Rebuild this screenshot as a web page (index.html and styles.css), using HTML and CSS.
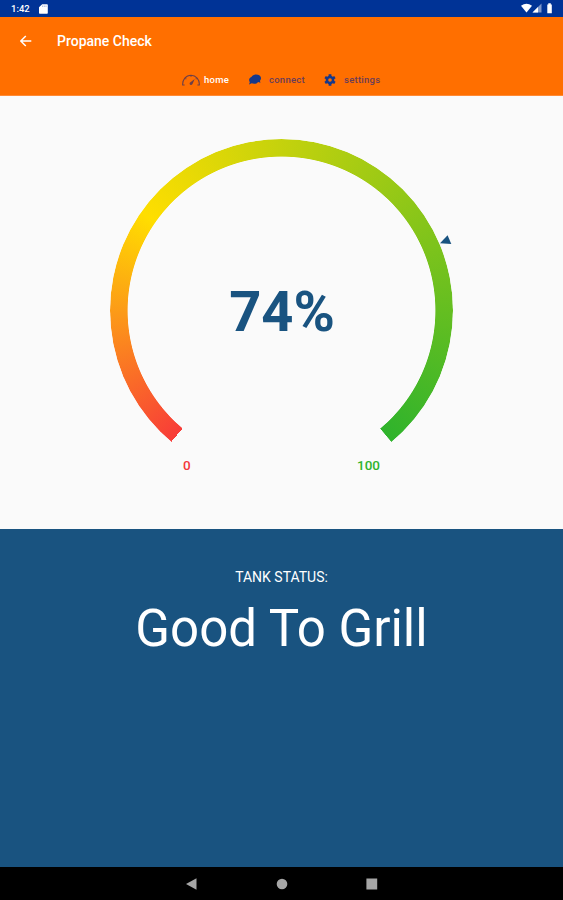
FILE: index.html
```html
<!DOCTYPE html>
<html lang="en">
<head>
    <meta charset="UTF-8">
    <title>Propane Check</title>
    <link rel="stylesheet" href="styles.css">
</head>
<body>

<div class="status-bar">
    <span class="clock">1:42</span>
    <svg class="sd-card" width="9" height="10" viewBox="0 0 9 10"><path fill="#fff" d="M3.200 .3h4.800q.8 0 .8.8v7.800q0 .8-.8.8H.8Q0 9.700 0 8.900V3.300z"/><path stroke="#8ba0d0" stroke-width=".7" d="M3.600 1.500v1.500M5.300 1.500v1.500M7 1.500v1.500"/></svg>
    <svg class="signals" width="34" height="12" viewBox="0 0 34 12">
        <path fill="#fff" d="M0 3.800Q5.500-.2 11 3.800L5.500 10.500z"/>
        <path fill="#7f98cb" d="M20.500 1.500v9h-9z"/>
        <path fill="#fff" d="M17 5v5.500h-5.500z"/>
        <path fill="#fff" d="M26.300 2.500h1V1.300h2.500v1.200h1v8.700h-4.500z"/>
    </svg>
</div>

<div class="header">
    <div class="title-row">
        <svg class="back" width="12" height="12" viewBox="0 0 12 12"><path fill="none" stroke="#fff" stroke-width="1.500" d="M11.300 6H.9M5.800 1L.8 6l5 5"/></svg>
        <span class="title">Propane Check</span>
    </div>
    <div class="tabs">
        <a class="tab home active">
            <svg width="18" height="12" viewBox="0 0 18 12">
                <path fill="none" stroke="#6d3f48" stroke-width="1.100" d="M2.600 11H.7C.3 5.500 4 1.200 9 1.200s8.700 4.300 8.300 9.800h-1.900M3.200 4.200l1.100 1M9 1.500v1.300M14.800 4.200l-1.100 1"/>
                <path fill="#6d3f48" d="M12.700 5l-2.200 5q-.8 1.300-2 .9-1.500-.8-.7-2.100z"/>
            </svg>
            <span>home</span>
        </a>
        <a class="tab connect">
            <svg width="12" height="11" viewBox="0 0 12 11"><path fill="#15388b" d="M7 .4c3 0 5 1.500 5 3.700 0 1.200-.4 2-1.100 2.700l.6 1.900-2.400-.8c-.8 1.200-2.300 1.900-4 1.900-.9 0-1.700-.2-2.400-.5L0 10.400l.8-2.200C-.6 6.100.2 3.600 2.400 2.900 3.200 1.300 4.900.4 7 .4z"/></svg>
            <span>connect</span>
        </a>
        <a class="tab settings">
            <svg width="12" height="12" viewBox="0 0 12 12">
                <g stroke="#15388b" stroke-width="2.800"><path d="M6 .3v11.400M1.100 3.150l9.800 5.700M1.100 8.850l9.800-5.700"/></g>
                <circle cx="6" cy="6" r="4.300" fill="#15388b"/>
                <circle cx="6" cy="6" r="1.800" fill="#ff6f00"/>
            </svg>
            <span>settings</span>
        </a>
    </div>
</div>

<div class="main">
    <div class="gauge">
        <div class="ring"></div>
        <div class="value">74%</div>
        <svg class="pointer" width="12" height="10" viewBox="0 0 12 10"><path fill="#195380" d="M0 8.200L7.600.3l3.700 8.700z"/></svg>
    </div>
    <div class="limits">
        <span class="min">0</span>
        <span class="max">100</span>
    </div>
</div>

<div class="tank">
    <div class="tank-label">TANK STATUS:</div>
    <div class="tank-status">Good To Grill</div>
</div>

<div class="nav-bar">
    <svg width="12" height="12" viewBox="0 0 12 12"><path fill="#a6a6a6" d="M10.500 .3v11.400L0 6z"/></svg>
    <svg width="12" height="12" viewBox="0 0 12 12"><circle cx="6" cy="6" r="5.300" fill="#a6a6a6"/></svg>
    <svg width="12" height="12" viewBox="0 0 12 12"><path fill="#a6a6a6" d="M.4.500h10.800v11H.4z"/></svg>
</div>

</body>
</html>
```
FILE: styles.css
```css
* {
    box-sizing: border-box;
}

body {
    display: flex;
    flex-direction: column;
    height: 900px;
    margin: 0;
    overflow: hidden;
    font-family: Roboto, sans-serif;
    background: #fafafa;
}

svg {
    display: block;
    flex: none;
}

.status-bar {
    display: flex;
    height: 17px;
    padding: 2px 8px 0 11px;
    background: #003396;
    color: #fff;
}

.clock {
    width: 28px;
    font-size: 9.5px;
    font-weight: 500;
    line-height: 14px;
}

.sd-card {
    margin-top: 2px;
}

.signals {
    margin-left: auto;
}

.header {
    height: 79px;
    background: #ff6f00;
    border-bottom: 1px solid #ff8a35;
}

.title-row {
    display: flex;
    align-items: center;
    height: 47px;
    padding-left: 20px;
    color: #fff;
}

.title {
    margin-left: 25px;
    font-size: 14px;
    font-weight: 500;
}

.tabs {
    display: flex;
    height: 31px;
    padding-left: 182px;
}

.tab {
    display: flex;
    align-items: center;
    color: #6a3d58;
    font-size: 9.5px;
    font-weight: 500;
    letter-spacing: .25px;
}

.tab.active {
    color: #fff;
}

.home {
    width: 67px;
    gap: 4px;
}

.connect {
    width: 75px;
    gap: 8px;
}

.settings {
    gap: 8px;
}

.main {
    height: 433px;
    padding-top: 43px;
}

.gauge {
    position: relative;
    display: grid;
    width: 343px;
    height: 343px;
    margin: 0 auto;
}

.ring,
.value {
    grid-area: 1 / 1;
}

.ring {
    border-radius: 50%;
    background: conic-gradient(from 220deg, #f83c38, #ffde00 85deg, #2fb32c 280deg, transparent 280.2deg);
    -webkit-mask: radial-gradient(circle, transparent 153.5px, #000 154.3px);
    mask: radial-gradient(circle, transparent 153.5px, #000 154.3px);
}

.value {
    place-self: center;
    padding: 2px 0 0 1px;
    color: #195380;
    font-size: 56px;
    font-weight: 700;
    line-height: 60px;
}

.pointer {
    position: absolute;
    left: 330px;
    top: 96px;
}

.limits {
    display: flex;
    justify-content: space-between;
    margin-top: -25px;
    padding: 0 183px;
    font-size: 13.5px;
    font-weight: 500;
    line-height: 16px;
}

.min {
    color: #f4383a;
}

.max {
    color: #2fb32c;
}

.tank {
    height: 338px;
    padding-top: 39px;
    background: #195380;
    color: #fff;
    text-align: center;
}

.tank-label {
    font-size: 14px;
    line-height: 18px;
}

.tank-status {
    margin-top: 13px;
    font-size: 51px;
    line-height: 60px;
}

.nav-bar {
    display: flex;
    gap: 78px;
    height: 33px;
    padding: 11px 0 0 186px;
    background: #000;
}
```
